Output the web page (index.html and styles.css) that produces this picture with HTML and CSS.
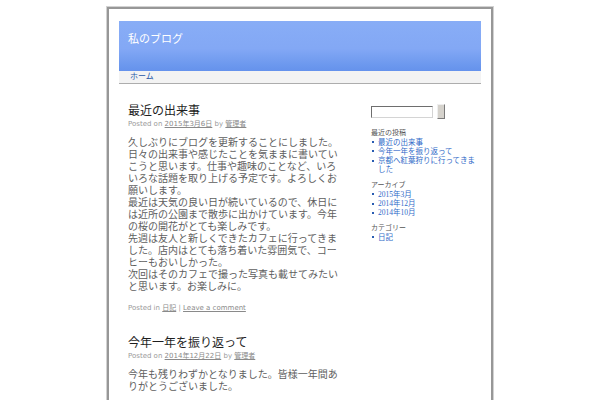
FILE: index.html
```html
<!DOCTYPE html>
<html lang="ja">
<head>
<meta charset="utf-8">
<title>私のブログ</title>
<link rel="stylesheet" href="styles.css">
</head>
<body>
<div class="page">
  <header class="masthead">
    <div class="site-title">私のブログ</div>
  </header>
  <nav class="menu"><a href="#">ホーム</a></nav>
  <div class="layout">
    <main class="content">
      <article class="post">
        <h2 class="post-title">最近の出来事</h2>
        <div class="meta">Posted on <a href="#">2015年3月6日</a> by <a href="#">管理者</a></div>
        <div class="entry">
          <p>久しぶりにブログを更新することにしました。日々の出来事や感じたことを気ままに書いていこうと思います。仕事や趣味のことなど、いろいろな話題を取り上げる予定です。よろしくお願いします。<br>最近は天気の良い日が続いているので、休日には近所の公園まで散歩に出かけています。今年の桜の開花がとても楽しみです。<br>先週は友人と新しくできたカフェに行ってきました。店内はとても落ち着いた雰囲気で、コーヒーもおいしかった。<br>次回はそのカフェで撮った写真も載せてみたいと思います。お楽しみに。</p>
        </div>
        <div class="foot">Posted in <a href="#">日記</a> | <a href="#">Leave a comment</a></div>
      </article>
      <article class="post">
        <h2 class="post-title">今年一年を振り返って</h2>
        <div class="meta">Posted on <a href="#">2014年12月22日</a> by <a href="#">管理者</a></div>
        <div class="entry">
          <p>今年も残りわずかとなりました。皆様一年間ありがとうございました。</p>
        </div>
      </article>
    </main>
    <aside class="sidebar">
      <form class="search">
        <input class="search-field" type="text" aria-label="検索">
        <button class="search-btn" type="button" aria-label="検索"></button>
      </form>
      <section class="widget">
        <h3 class="widget-title">最近の投稿</h3>
        <ul class="links">
          <li><a href="#">最近の出来事</a></li>
          <li><a href="#">今年一年を振り返って</a></li>
          <li><a href="#">京都へ紅葉狩りに行ってきました</a></li>
        </ul>
      </section>
      <section class="widget">
        <h3 class="widget-title">アーカイブ</h3>
        <ul class="links">
          <li><a href="#">2015年3月</a></li>
          <li><a href="#">2014年12月</a></li>
          <li><a href="#">2014年10月</a></li>
        </ul>
      </section>
      <section class="widget">
        <h3 class="widget-title">カテゴリー</h3>
        <ul class="links">
          <li><a href="#">日記</a></li>
        </ul>
      </section>
    </aside>
  </div>
</div>
</body>
</html>
```
FILE: styles.css
```css
html, body {
  margin: 0;
  padding: 0;
  background: #ffffff;
}

body {
  font-family: "DejaVu Sans", "Noto Sans CJK JP", sans-serif;
  color: #555;
}

.page {
  width: 362px;
  margin: 7px auto 0;
  padding: 12px 10px 0;
  border: 2px solid #979797;
  border-bottom: none;
  box-shadow: 0 0 0 1px #d2d2d2;
  min-height: 379px;
}

.masthead {
  height: 50px;
  box-sizing: border-box;
  padding: 12px 9px 0;
  background: linear-gradient(180deg, #88adf6 0%, #83a8f5 55%, #6c98ee 88%, #6592ec 100%);
}

.site-title {
  color: #ffffff;
  font-size: 11px;
  line-height: 14px;
}

.menu {
  height: 12px;
  padding-left: 11px;
  background: #f3f3f3;
  border-bottom: 1px solid #adadad;
  font-size: 8px;
  line-height: 12px;
}

.menu a {
  color: #2656a6;
  text-decoration: none;
}

.layout {
  display: flex;
  gap: 31px;
  padding: 20px 0 0 9px;
}

.content {
  width: 212px;
  flex: none;
}

.post + .post {
  margin-top: 23.5px;
}

.post-title {
  margin: 0;
  font-size: 12px;
  line-height: 14px;
  font-weight: normal;
  color: #1e1e1e;
}

.meta,
.foot {
  font-size: 7px;
  line-height: 9px;
  color: #9a9a9a;
}

.meta {
  margin-top: 2px;
}

.meta a,
.foot a {
  color: #8a8a8a;
  text-decoration: underline;
}

.entry {
  margin-top: 8px;
  font-size: 10px;
  line-height: 12px;
  color: #5e5e5e;
  line-break: anywhere;
}

.entry p {
  margin: 0;
}

.foot {
  margin-top: 10.5px;
}

.sidebar {
  width: 105px;
  flex: none;
}

.search {
  display: flex;
  align-items: center;
  gap: 4px;
  height: 15px;
  margin: 0;
}

.search-field {
  width: 62px;
  height: 12px;
  box-sizing: border-box;
  margin: 0;
  padding: 0;
  background: #fff;
  border: 1px solid;
  border-color: #6e6e6e #d4d4d4 #d4d4d4 #6e6e6e;
}

.search-btn {
  width: 8px;
  height: 15px;
  box-sizing: border-box;
  margin: 0;
  padding: 0;
  background: #d5d2cc;
  border: 1px solid;
  border-color: #efefef #7a7a7a #7a7a7a #efefef;
}

.widget {
  margin-top: 6px;
}

.search + .widget {
  margin-top: 9.5px;
}

.widget-title {
  margin: 0;
  font-size: 7px;
  line-height: 9px;
  font-weight: normal;
  color: #555;
}

.links {
  margin: 0;
  padding: 0;
  list-style: none;
}

.links li {
  display: grid;
  grid-template-columns: 7px 1fr;
  font-size: 7px;
  line-height: 9.3px;
}

.links li::before {
  content: "";
  width: 2px;
  height: 2px;
  margin: 3.7px 0 0 1px;
  background: #2a5cb2;
}

.links a {
  color: #2f6ac8;
  text-decoration: none;
  font-family: "Liberation Serif", "Noto Sans CJK JP", serif;
  font-size: 7.5px;
}
```
